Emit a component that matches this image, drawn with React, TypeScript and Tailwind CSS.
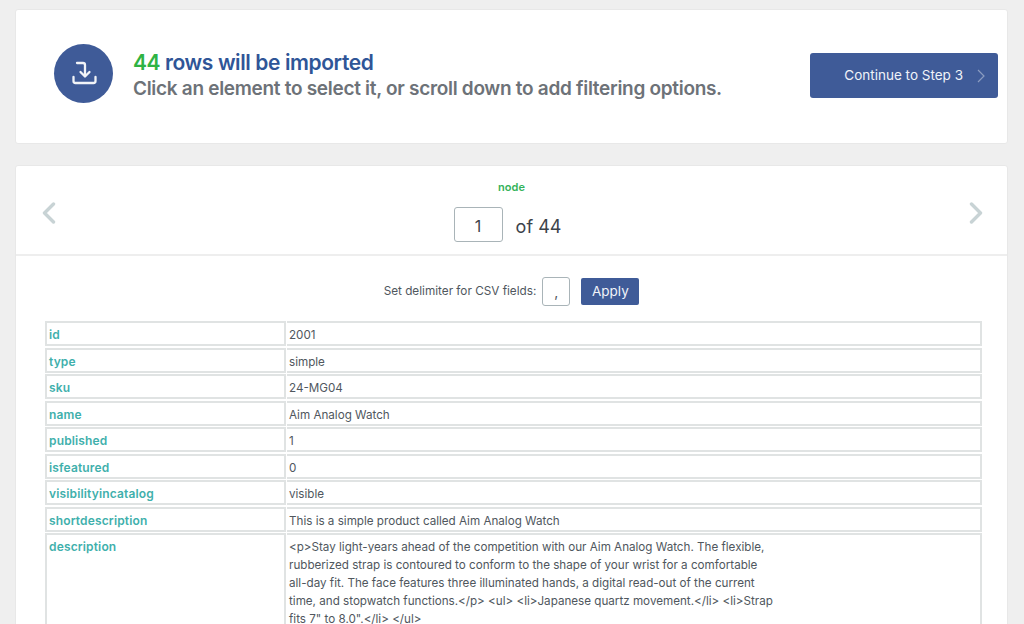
const rows: [string, string][] = [
  ["id", "2001"],
  ["type", "simple"],
  ["sku", "24-MG04"],
  ["name", "Aim Analog Watch"],
  ["published", "1"],
  ["isfeatured", "0"],
  ["visibilityincatalog", "visible"],
  ["shortdescription", "This is a simple product called Aim Analog Watch"],
];

const descLines = [
  "<p>Stay light-years ahead of the competition with our Aim Analog Watch. The flexible,",
  "rubberized strap is contoured to conform to the shape of your wrist for a comfortable",
  "all-day fit. The face features three illuminated hands, a digital read-out of the current",
  "time, and stopwatch functions.</p> <ul> <li>Japanese quartz movement.</li> <li>Strap",
  'fits 7" to 8.0".</li> </ul>',
];

function Chevron({ dir }: { dir: "left" | "right" }) {
  return (
    <svg width="14" height="22" viewBox="0 0 14 22" fill="none" stroke="#c8d3d5" strokeWidth="3.4" strokeLinecap="round" strokeLinejoin="round">
      <path d={dir === "left" ? "M11.5 2 L2.5 11 L11.5 20" : "M2.5 2 L11.5 11 L2.5 20"} />
    </svg>
  );
}

function Row({ k, children }: { k: string; children: React.ReactNode }) {
  return (
    <div className="flex gap-px">
      <div className="w-[241px] shrink-0 border-2 border-[#e0e3e3] pl-[2px] pt-[3px] text-[12px] leading-[18px] font-semibold tracking-[0.15px] text-[#3fb0ac]">{k}</div>
      <div className="flex-1 border-2 border-l-0 border-[#e0e3e3] pl-[2px] pt-[3px] text-[11.65px] leading-[18px] text-[#50575e]">{children}</div>
    </div>
  );
}

export default function App() {
  return (
    <div className="h-[624px] overflow-hidden bg-[#efefef] pl-[15px] pr-[16px] pt-[9px] font-['Inter',sans-serif]">
      <div className="flex h-[135px] items-center rounded-[3px] border border-[#e8e8e8] bg-white pb-[2px] pl-[38px] pr-[9px]">
        <div className="mb-[4px] flex h-[59px] w-[59px] shrink-0 items-center justify-center rounded-full bg-[#3f5b98]">
          <svg width="26" height="26" viewBox="0 0 26 26" fill="none" stroke="#f2f4f8" strokeWidth="2.3" strokeLinecap="round" strokeLinejoin="round">
            <path d="M6 2 H12 Q14 2 14 4 V15" />
            <path d="M9.5 11 L14 15.5 L18.5 11" />
            <path d="M2.5 16 V20 Q2.5 22 4.5 22 H22.5 Q24.5 22 24.5 20 V16" />
          </svg>
        </div>
        <div className="ml-[20px] flex-1">
          <div className="text-[21px] leading-[27px] font-semibold tracking-[-0.4px] text-[#2f5597]">
            <span className="text-[#2fb344]">44</span> rows will be imported
          </div>
          <div className="text-[19px] leading-[26px] font-semibold tracking-[-0.3px] text-[#6d7278]">
            Click an element to select it, or scroll down to add filtering options.
          </div>
        </div>
        <div className="flex h-[45px] w-[188px] shrink-0 items-center justify-end rounded-[3px] bg-[#3f5b98] pr-[13px] text-[13.5px] text-[#f0f3f8]">
          <span>Continue to Step 3</span>
          <svg className="ml-[14px]" width="8" height="14" viewBox="0 0 8 14" fill="none" stroke="#8b9cc1" strokeWidth="1.2">
            <path d="M1 1 L7 7 L1 13" />
          </svg>
        </div>
      </div>

      <div className="mt-[21px] rounded-t-[3px] border border-[#e8e8e8] bg-white">
        <div className="relative h-[90px] border-b-2 border-[#eeeeee]">
          <div className="absolute left-[26px] top-[36px]"><Chevron dir="left" /></div>
          <div className="absolute right-[24px] top-[36px]"><Chevron dir="right" /></div>
          <div className="pt-[14px] text-center text-[11px] leading-[14px] font-semibold text-[#35b35a]">node</div>
          <div className="mt-[13px] flex items-center justify-center gap-[13px] pr-[8px]">
            <div className="flex h-[35px] w-[49px] items-center justify-center rounded-[3px] border border-[#a9b4b8] pt-[3px] text-[16px] text-[#3c434a]">1</div>
            <span className="pt-[3px] text-[18px] text-[#3c434a]">of 44</span>
          </div>
        </div>

        <div className="flex h-[65px] items-center justify-center pt-[6px] text-[11.75px] text-[#50575e]">
          <span>Set delimiter for CSV fields:</span>
          <div className="ml-[6px] flex h-[29px] w-[28px] items-center justify-center rounded-[3px] border border-[#a9b4b8] text-[14px]">,</div>
          <div className="ml-[11px] flex h-[27px] w-[58px] items-center justify-center rounded-[2px] bg-[#3f5b98] text-[13.5px] text-[#f0f3f8]">Apply</div>
        </div>

        <div className="ml-[29px] mr-[25px] flex flex-col gap-[1.5px]">
          {rows.map(([k, v]) => (
            <Row key={k} k={k}>{v}</Row>
          ))}
          <Row k="description">
            {descLines.map((l) => (
              <div key={l}>{l}</div>
            ))}
          </Row>
        </div>
      </div>
    </div>
  );
}
